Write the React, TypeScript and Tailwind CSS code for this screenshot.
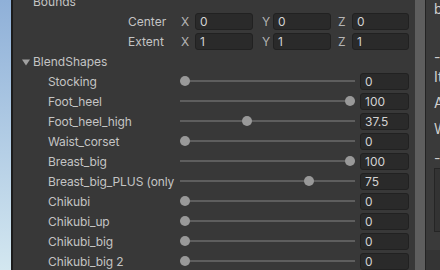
import React from "react"

const shapes: [string, number][] = [
  ["Stocking", 0],
  ["Foot_heel", 100],
  ["Foot_heel_high", 37.5],
  ["Waist_corset", 0],
  ["Breast_big", 100],
  ["Breast_big_PLUS (only", 75],
  ["Chikubi", 0],
  ["Chikubi_up", 0],
  ["Chikubi_big", 0],
  ["Chikubi_big 2", 0],
]

function Field({ value, w }: { value: string; w: string }) {
  return (
    <div
      className={`${w} h-[17px] rounded-[3px] border border-[#212121] bg-[#2a2a2a] pl-[4px] text-[12px] leading-[16px] text-[#d2d2d2]`}
    >
      {value}
    </div>
  )
}

function VectorRow({ label, v }: { label: string; v: string }) {
  return (
    <div className="flex h-[20px] items-center pl-[115px]">
      <div className="w-[53px] pt-[2px] text-[#c4c4c4]">{label}</div>
      <div className="w-[14px] pt-[2px] text-[#b4b4b4]">X</div>
      <Field value={v} w="w-[58px]" />
      <div className="ml-[9px] w-[11px] pt-[2px] text-[#b4b4b4]">Y</div>
      <Field value={v} w="w-[58px]" />
      <div className="ml-[7px] w-[14px] pt-[2px] text-[#b4b4b4]">Z</div>
      <Field value={v} w="w-[57px]" />
    </div>
  )
}

function SliderRow({ label, value }: { label: string; value: number }) {
  const pos = (value / 100) * 165
  return (
    <div className="flex h-[20px] items-center gap-[5px] pl-[35px]">
      <div className="w-[127px] shrink-0 whitespace-nowrap pt-[2px] tracking-[-0.1px] text-[#c4c4c4]">
        {label}
      </div>
      <div className="relative flex h-[20px] w-[175px] shrink-0 items-center">
        <div className="h-[2px] w-full bg-[#5e5e5e]" />
        <div
          className="absolute top-[5px] h-[10px] w-[10px] rounded-full bg-[#999999]"
          style={{ left: pos }}
        />
      </div>
      <Field value={String(value)} w="w-[49px]" />
    </div>
  )
}

export default function App() {
  return (
    <div
      className="flex h-[270px] w-[440px] overflow-hidden bg-[#383838] text-[12px]"
      style={{ fontFamily: "Inter, 'Noto Sans', sans-serif" }}
    >
      <div className="w-[11px] bg-gradient-to-b from-[#8fb0d8] to-[#d3e7f0]" />
      <div className="w-[2px] bg-[#1b1b1b]" />
      <div className="w-[402px] overflow-hidden bg-[#383838]">
        <div className="mt-[-9px]">
          <div className="flex h-[20px] items-center pl-[20px] pt-[2px] text-[#c4c4c4]">Bounds</div>
          <VectorRow label="Center" v="0" />
          <VectorRow label="Extent" v="1" />
          <div className="flex h-[20px] items-center gap-[2px] pl-[8px] pt-[2px] text-[#c4c4c4]">
            <svg width="10" height="10" viewBox="0 0 10 10">
              <path d="M1 2.5 L9 2.5 L5 8.5 Z" fill="#a0a0a0" />
            </svg>
            BlendShapes
          </div>
          {shapes.map(([l, v]) => (
            <SliderRow key={l} label={l} value={v} />
          ))}
        </div>
      </div>
      <div className="w-[10px] bg-[#5e5e5e]" />
      <div className="w-[1px] bg-[#232323]" />
      <div className="flex w-[14px] flex-col overflow-hidden bg-[#3a3a3a] pl-[8px] text-[14px] leading-[20px] text-[#cfcfcf]">
        <div className="-mt-[1px] whitespace-nowrap">b</div>
        <div className="mt-[28px] whitespace-nowrap">-</div>
        <div className="whitespace-nowrap">It</div>
        <div className="mt-[6px] whitespace-nowrap">A</div>
        <div className="mt-[6px] whitespace-nowrap">W</div>
        <div className="mt-[9px] whitespace-nowrap">-</div>
        <div className="h-[64px] w-[20px] shrink-0 border border-[#252525] bg-[#333333]" />
        <div className="flex-1" />
        <div className="-ml-[8px] h-[20px] w-[14px] shrink-0 bg-[#343434]" />
      </div>
    </div>
  )
}
